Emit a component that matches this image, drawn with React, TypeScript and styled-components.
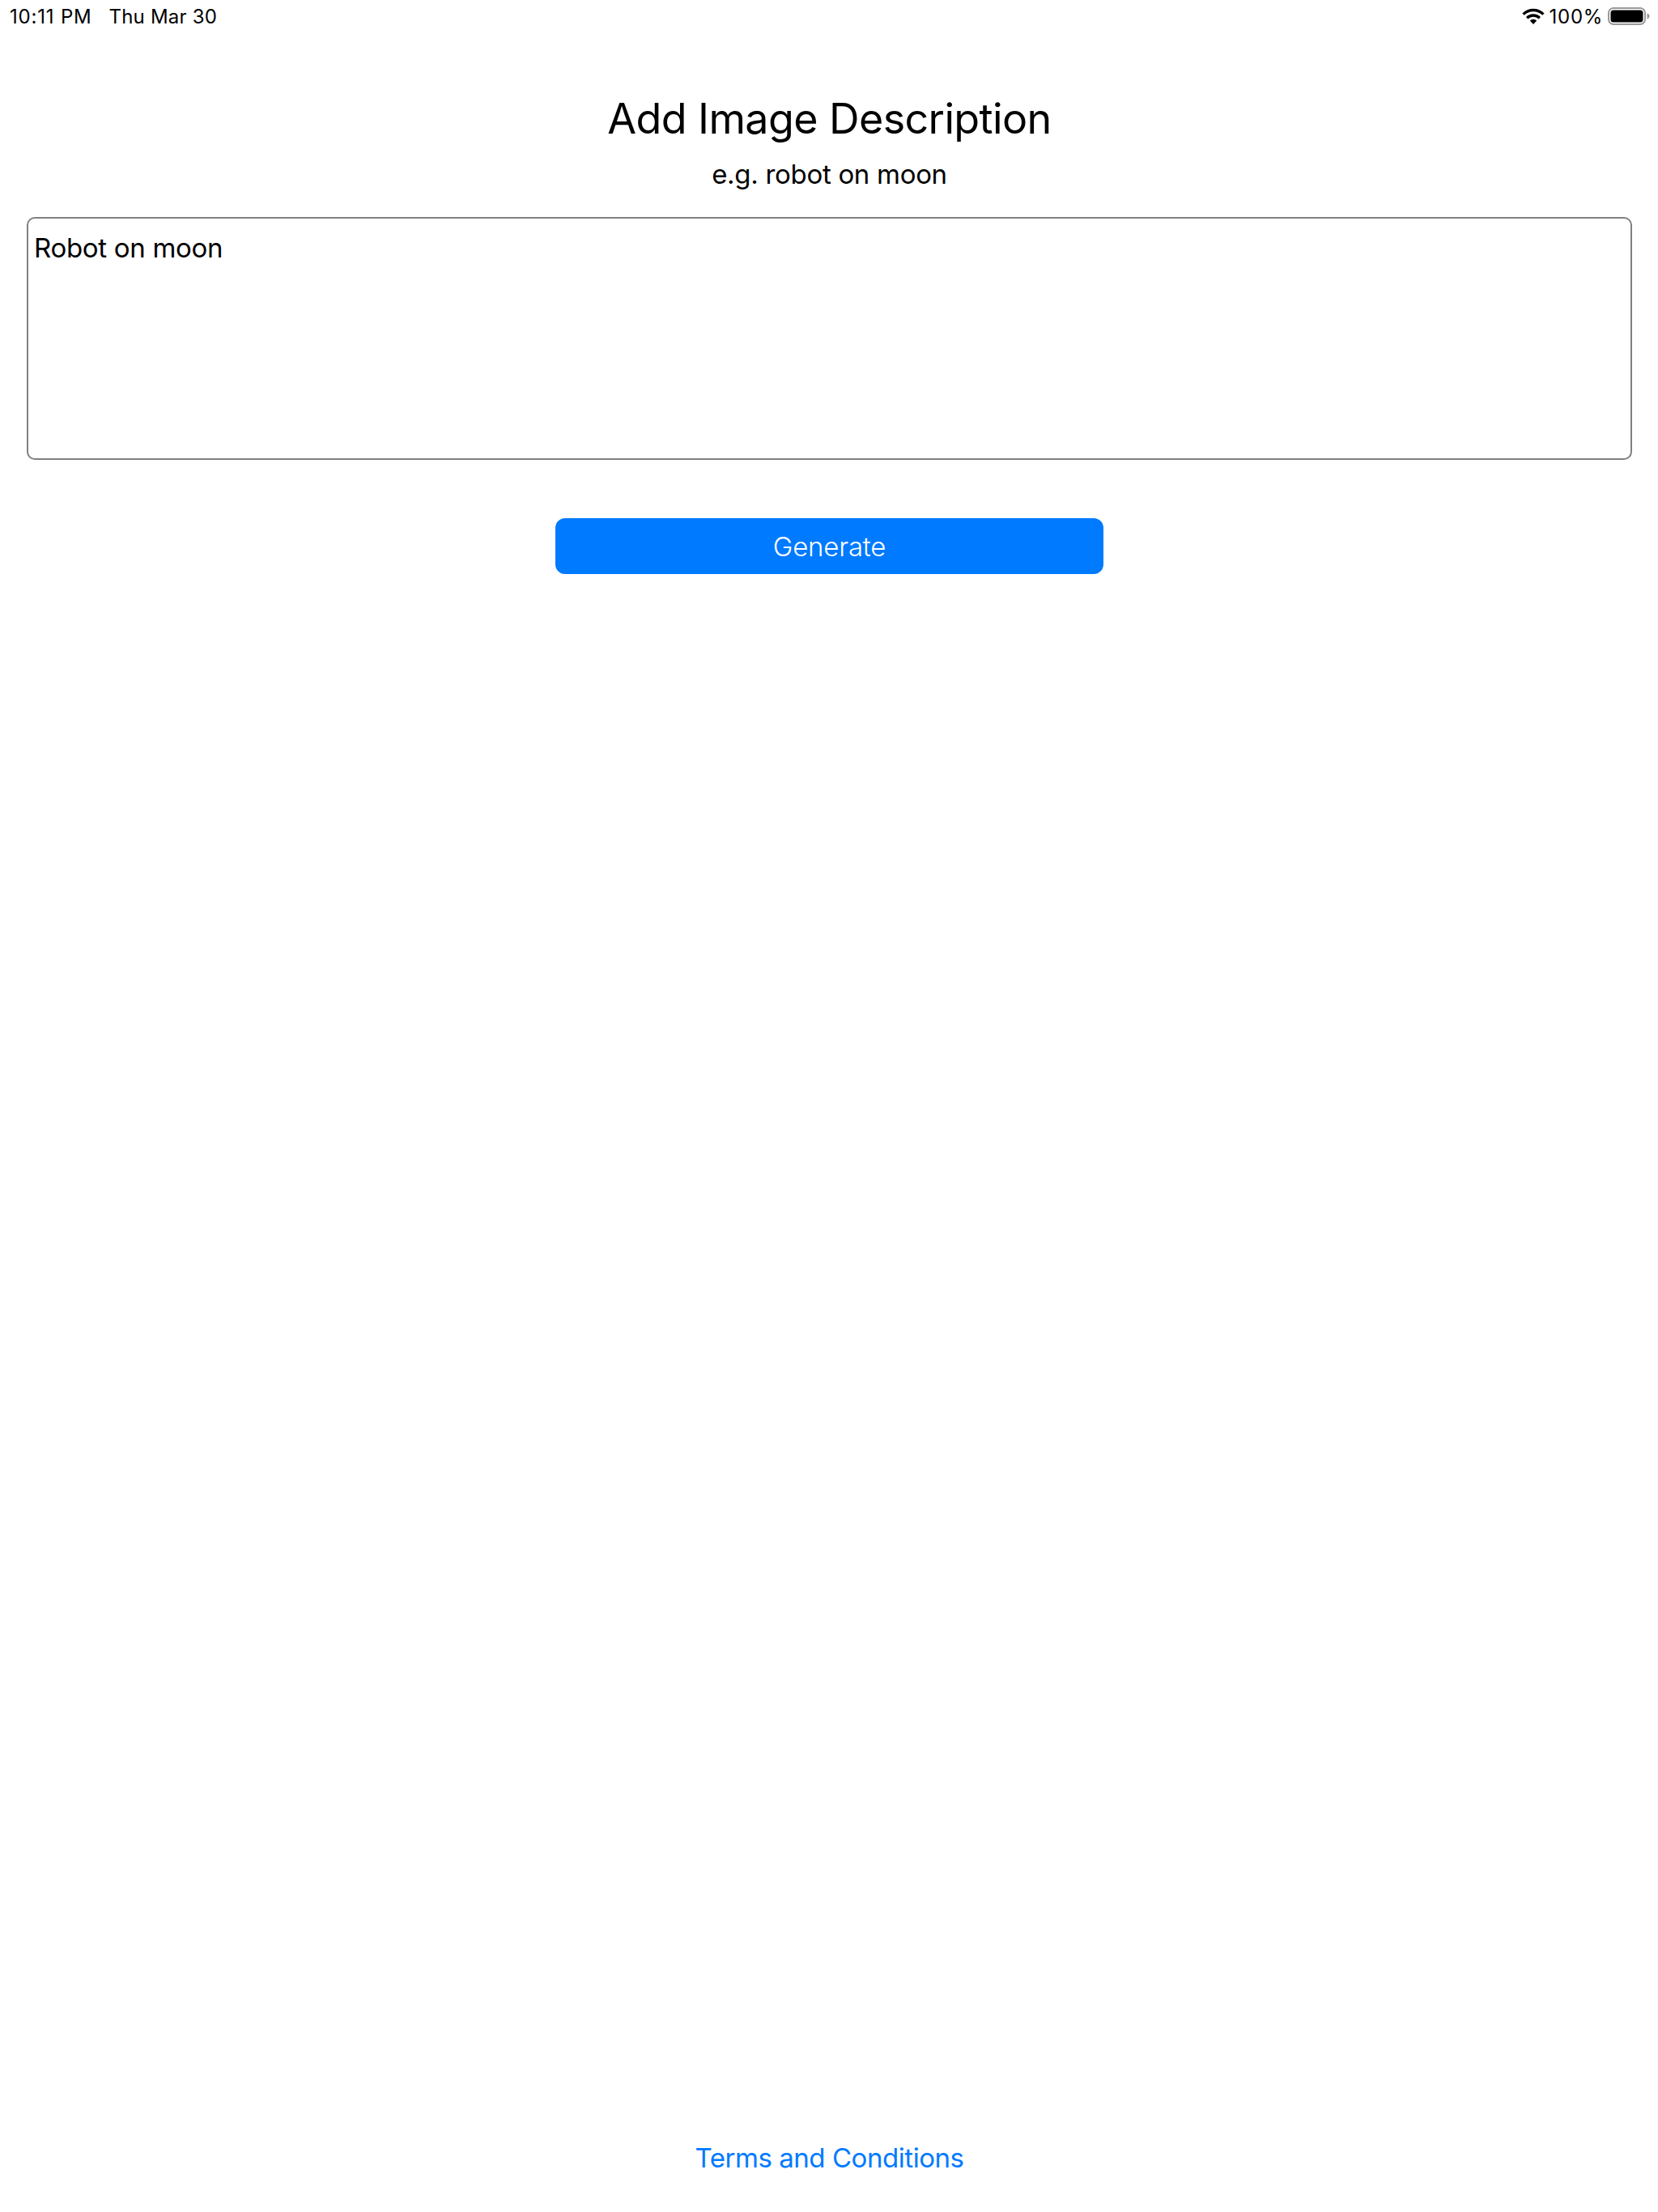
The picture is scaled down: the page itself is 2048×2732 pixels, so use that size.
import React from "react";
import styled, { createGlobalStyle } from "styled-components";

const Global = createGlobalStyle`
  html, body { margin: 0; padding: 0; background: #fff; }
  body { font-family: Inter, "Liberation Sans", sans-serif; color: #000; }
`;

const Page = styled.div`
  width: 2048px;
  height: 2732px;
  display: flex;
  flex-direction: column;
  background: #fff;
`;

const StatusBar = styled.div`
  height: 40px;
  padding: 0 10px 0 12px;
  display: flex;
  align-items: center;
  justify-content: space-between;
  font-size: 24px;
  letter-spacing: 0.2px;
  color: #000;
`;

const StatusGroup = styled.div<{ $gap: number }>`
  display: flex;
  align-items: center;
  gap: ${(p) => p.$gap}px;
`;

const ClockText = styled.span`
  letter-spacing: 0.8px;
`;

const BatteryText = styled.span`
  letter-spacing: 0.7px;
`;

const Content = styled.main`
  flex: 1;
  display: flex;
  flex-direction: column;
  align-items: center;
  padding: 76px 32px 0 33px;
`;

const Title = styled.h1`
  margin: 0;
  font-size: 52px;
  line-height: 62px;
  font-weight: 400;
  letter-spacing: -0.6px;
`;

const Subtitle = styled.p`
  margin: 15px 0 0;
  font-size: 33px;
  line-height: 44px;
  font-weight: 400;
  letter-spacing: -0.3px;
`;

const DescriptionBox = styled.div`
  box-sizing: border-box;
  width: 100%;
  height: 300px;
  margin-top: 31px;
  padding: 16px 7px;
  border: 2px solid #808080;
  border-radius: 10px;
  font-size: 33px;
  line-height: 40px;
  letter-spacing: -0.3px;
`;

const GenerateButton = styled.button`
  width: 677px;
  height: 69px;
  margin-top: 72px;
  padding: 0;
  border: none;
  border-radius: 12px;
  background: #007aff;
  color: #fff;
  font-family: inherit;
  font-size: 33px;
  font-weight: 300;
  letter-spacing: -0.2px;
`;

const Spacer = styled.div`
  flex: 1;
`;

const TermsLink = styled.a`
  margin-bottom: 44px;
  font-size: 33px;
  line-height: 46px;
  font-weight: 400;
  letter-spacing: -0.45px;
  color: #007aff;
`;

const WifiIcon = () => (
  <svg width="28" height="20" viewBox="0 0 28 20" fill="none" aria-hidden="true">
    <path d="M1.600 7.600A17.500 17.500 0 0 1 26.400 7.600" stroke="#000" strokeWidth="3.400" />
    <path d="M6.200 12.200A11 11 0 0 1 21.800 12.200" stroke="#000" strokeWidth="3.400" />
    <path d="M14 20L9.800 15.500A6 6 0 0 1 18.200 15.500Z" fill="#000" />
  </svg>
);

const BatteryIcon = () => (
  <svg width="52" height="24" viewBox="0 0 52 24" aria-hidden="true">
    <rect x="1" y="2" width="45" height="20" rx="6" fill="none" stroke="#9a9a9a" strokeWidth="2" />
    <rect x="3.500" y="4.500" width="40" height="15" rx="3.500" fill="#000" />
    <path d="M48.500 8.500c1.800.5 3 1.800 3 3.500s-1.200 3-3 3.500z" fill="#9a9a9a" />
  </svg>
);

export default function App() {
  return (
    <Page>
      <Global />
      <StatusBar>
        <StatusGroup $gap={21}>
          <ClockText>10:11 PM</ClockText>
          <span>Thu Mar 30</span>
        </StatusGroup>
        <StatusGroup $gap={6}>
          <WifiIcon />
          <BatteryText>100%</BatteryText>
          <BatteryIcon />
        </StatusGroup>
      </StatusBar>
      <Content>
        <Title>Add Image Description</Title>
        <Subtitle>e.g. robot on moon</Subtitle>
        <DescriptionBox>Robot on moon</DescriptionBox>
        <GenerateButton>Generate</GenerateButton>
        <Spacer />
        <TermsLink>Terms and Conditions</TermsLink>
      </Content>
    </Page>
  );
}
